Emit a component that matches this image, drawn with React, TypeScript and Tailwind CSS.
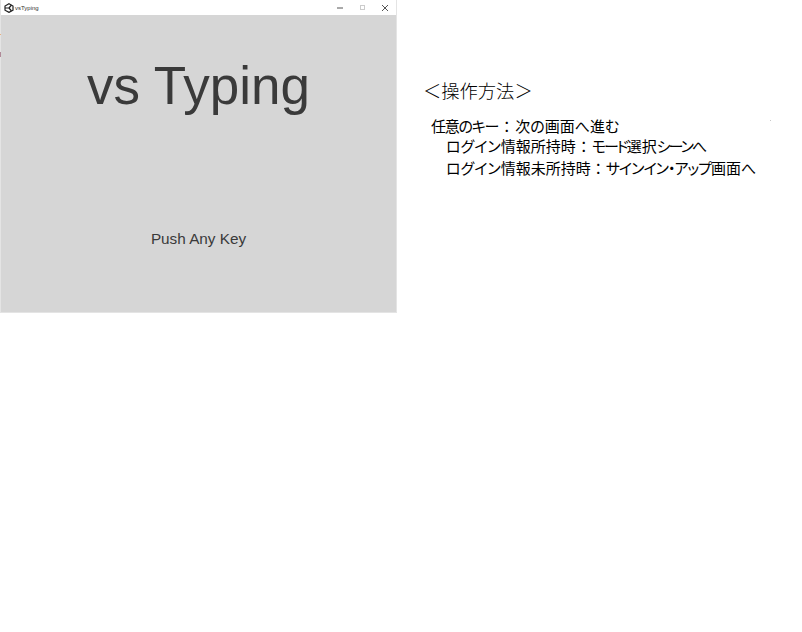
function Colon({ className }: { className: string }) {
  return <span className={`inline-block text-center tracking-normal [font-feature-settings:normal] ${className}`}>：</span>;
}

export default function App() {
  const cjk = { fontFamily: '"Noto Sans CJK JP", sans-serif' };
  return (
    <div className="relative flex items-start w-[802px] h-[632px] bg-white overflow-hidden">
      <div className="relative w-[397px] h-[313px] shrink-0 flex flex-col border-l border-r border-b border-[#e4e4e4]">
        <div className="h-[15px] shrink-0 bg-white flex items-center pl-[3px]">
          <svg width="10" height="10" viewBox="0 0 10 10" fill="none" stroke="#222" strokeWidth="1.2">
            <path d="M5 .8 9 3v4.2L5 9.4 1 7.2V3z" />
            <path d="M1 5h4.5M5 5l2.5-3M5 5l2.5 3" />
          </svg>
          <span className="ml-[1px] text-[6px] leading-none text-[#333]" style={{ fontFamily: '"Liberation Sans", sans-serif' }}>vsTyping</span>
          <div className="ml-auto flex items-center h-full">
            <svg width="6" height="6" viewBox="0 0 6 6" stroke="#555" className="mr-[17px]"><path d="M0 3h6" /></svg>
            <svg width="5" height="5" viewBox="0 0 5 5" fill="none" stroke="#ccc" className="mr-[17px]"><rect x=".5" y=".5" width="4" height="4" /></svg>
            <svg width="6" height="6" viewBox="0 0 6 6" stroke="#555" className="mr-[8px]"><path d="M0 0l6 6M6 0L0 6" /></svg>
          </div>
        </div>
        <div className="flex-1 bg-[#d6d6d6] flex flex-col items-center text-[#3a3a3a]" style={{ fontFamily: '"Liberation Sans", sans-serif' }}>
          <div className="mt-[37px] text-[53px] leading-[68px]">vs Typing</div>
          <div className="mt-[110px] text-[15.3px] leading-[18px]">Push Any Key</div>
        </div>
        <div className="absolute left-[-1px] top-[34px] w-[1px] h-[1px] bg-[#e8b080]" />
        <div className="absolute left-[-1px] top-[52px] w-[1px] h-[5px] bg-[#b08a98]" />
      </div>
      <div className="pl-[26px] pt-[77px] text-black" style={cjk}>
        <div className="text-[18.3px] leading-[26px] font-light">＜操作方法＞</div>
        <div className="mt-[13px] pl-[8px] text-[15px] leading-[20px] whitespace-nowrap [font-feature-settings:'palt']">
          <span className="tracking-[-1.2px]">任意のキー</span><Colon className="w-[17px]" />次の画面へ進む
        </div>
        <div className="pl-[23px] text-[15px] leading-[20px] whitespace-nowrap [font-feature-settings:'palt']">
          ログイン情報所持時<Colon className="w-[16px]" /><span className="tracking-[-2px]">モード</span>選択<span className="tracking-[-2px]">シーン</span>へ
        </div>
        <div className="pl-[23px] text-[15px] leading-[24px] whitespace-nowrap [font-feature-settings:'palt']">
          ログイン情報未所持時<Colon className="w-[15px]" /><span className="tracking-[-1px]">サインイン・アップ</span>画面へ
        </div>
      </div>
      <div className="absolute left-[770px] top-[120px] w-[1px] h-[1px] bg-[#c8c8c8]" />
    </div>
  );
}
